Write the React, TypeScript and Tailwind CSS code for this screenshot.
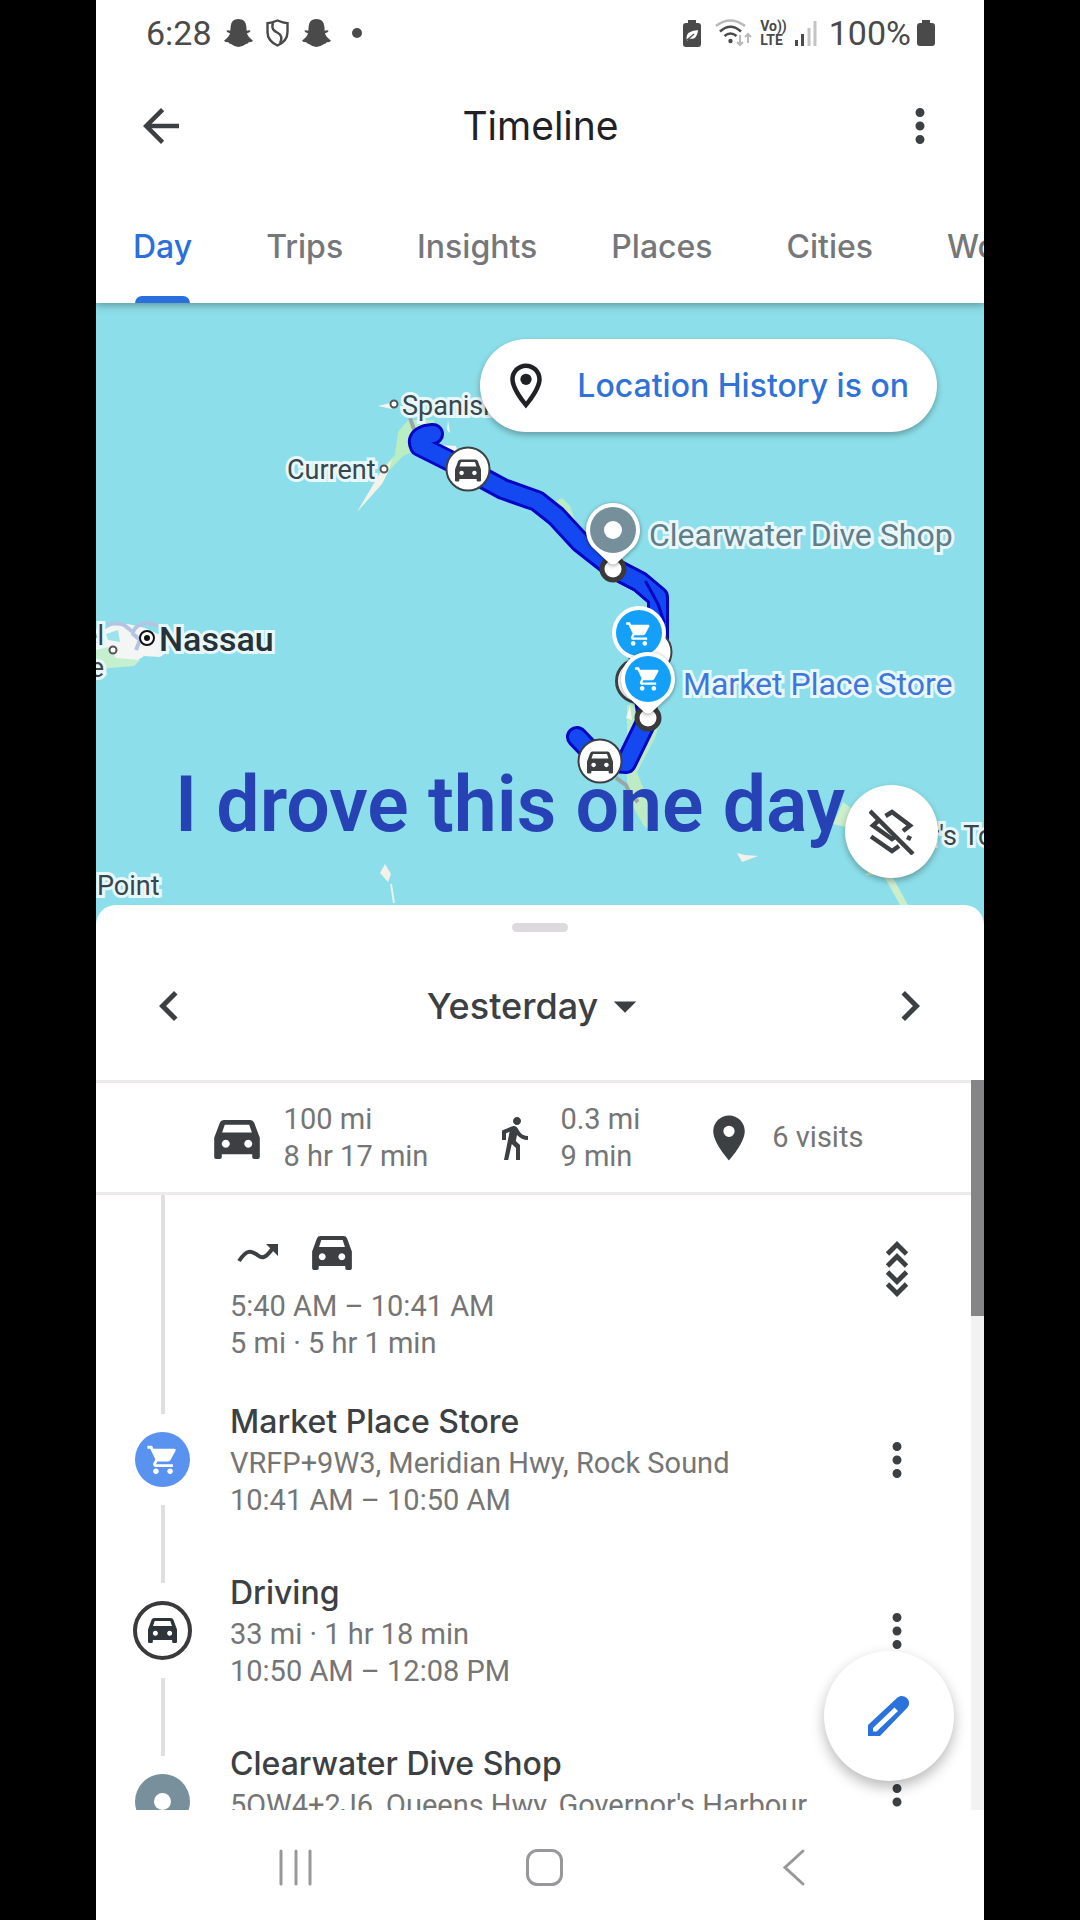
import type { ReactNode, SVGProps } from "react";
import {
  MdArrowBack,
  MdArrowDropDown,
  MdChevronLeft,
  MdChevronRight,
  MdDirectionsWalk,
  MdLocationOn,
  MdMoreVert,
  MdOutlineLocationOn,
  MdShoppingCart,
} from "react-icons/md";

const tabs = ["Day", "Trips", "Insights", "Places", "Cities", "World"];

function Car(props: SVGProps<SVGSVGElement>) {
  return (
    <svg viewBox="0 0 138 118" aria-hidden {...props}>
      <path
        fill="currentColor"
        fillRule="evenodd"
        d="M0 112 V54 L17 8 Q20 0 29 0 H109 Q118 0 121 8 L138 54 V112 Q138 118 132 118 H121 Q115 118 115 112 V104 H23 V112 Q23 118 17 118 H6 Q0 118 0 112Z M24 38 H114 L106 14 H32Z M35 60 a12 12 0 1 0 0.100 0Z M103 60 a12 12 0 1 0 0.100 0Z"
      />
    </svg>
  );
}

function Ghost() {
  return (
    <svg className="h-[28px] w-[29px]" viewBox="0 0 87 84" fill="currentColor" aria-hidden>
      <path d="M20 22 Q22 0 43 0 Q65 0 67 22 L68 35 Q76 32 80 35 Q79 40 69 43 Q72 55 87 65 Q84 70 74 70 Q72 75 66 75 Q56 83 43 84 Q31 83 21 75 Q15 75 13 70 Q3 70 0 65 Q15 55 18 43 Q8 40 7 35 Q11 32 19 35Z" />
    </svg>
  );
}

function StatusBar() {
  return (
    <div className="flex h-[66px] items-center justify-between pr-[49px] pl-[50px] text-[34px] text-[#4a4a4a]">
      <div className="flex items-center">
        <span className="mr-[12px]">6:28</span>
        <Ghost />
        <svg className="mx-[13px] h-[28px] w-[23px]" viewBox="0 0 23 28" fill="none" stroke="currentColor" strokeWidth="2.400" aria-hidden>
          <path d="M11.500 1.500 C8 3 5 4 1.500 4.200 V13 C1.500 19.500 6 24 11.500 26.500 C17 24 21.500 19.500 21.500 13 V4.200 C18 4 15 3 11.500 1.500Z" />
          <path d="M7 4 C5 10 8 12 12 14 C16.500 16.500 16 20 14 24" />
        </svg>
        <Ghost />
        <span className="ml-[21px] size-[10px] rounded-full bg-[#4a4a4a]" />
      </div>
      <div className="flex items-center">
        <svg className="mr-[14px] h-[27px] w-[18px]" viewBox="0 0 18 27" aria-hidden>
          <path d="M5 0 H13 V3 H15 Q18 3 18 6 V24 Q18 27 15 27 H3 Q0 27 0 24 V6 Q0 3 3 3 H5Z" fill="currentColor" />
          <path d="M3.500 18 C4 12 8 11 15 10 C14.500 16 12 20 6 18.500 L4 21Z" fill="#fff" />
          <path d="M4 20 L11 14" stroke="#4a4a4a" strokeWidth="1.200" />
        </svg>
        <svg className="mr-2 h-[28px] w-[37px]" viewBox="0 0 37 28" fill="none" strokeWidth="2.600" aria-hidden>
          <path d="M1 7 Q15 -4 30 7" stroke="#b9b9b9" />
          <path d="M5 12.500 Q15.500 3 26 12.500 M9.500 17 Q15.500 12 21.500 17" stroke="currentColor" />
          <circle cx="15.500" cy="22" r="2.200" fill="currentColor" />
          <path d="M25 16 V26 M22 23 L25 26 L28 23 M33 24 V15 M30 18 L33 15 L36 18" stroke="#b9b9b9" strokeWidth="2" />
        </svg>
        <span className="mr-2 flex flex-col text-[14px] leading-[14px] font-bold">
          <span>Vo))</span>
          <span>LTE</span>
        </span>
        <svg className="mr-3 h-[25px] w-[22px]" viewBox="0 0 22 25" aria-hidden>
          <path d="M0 19 h3 v6 h-3z M6 13 h3 v12 h-3z" fill="currentColor" />
          <path d="M12.500 7 h3 v18 h-3z M18.500 0 h3 v25 h-3z" fill="#c4c4c4" />
        </svg>
        <span className="mr-[6px]">100%</span>
        <svg className="h-[26px] w-[18px]" viewBox="0 0 18 26" fill="currentColor" aria-hidden>
          <path d="M5 0 H13 V3 H15 Q18 3 18 6 V23 Q18 26 15 26 H3 Q0 26 0 23 V6 Q0 3 3 3 H5Z" />
        </svg>
      </div>
    </div>
  );
}

function Header() {
  return (
    <header className="relative z-10 flex h-[303px] shrink-0 flex-col bg-white shadow-[0_2px_8px_rgba(0,0,0,0.35)]">
      <StatusBar />
      <div className="flex h-[120px] items-center justify-between pr-[37px] pl-[38px] text-[#3c4043]">
        <button type="button" aria-label="Back">
          <MdArrowBack className="size-[54px]" />
        </button>
        <h1 className="font-['Inter'] text-[39px] leading-[48px] text-[#202124]">Timeline</h1>
        <button type="button" aria-label="More options">
          <MdMoreVert className="size-[54px]" />
        </button>
      </div>
      <nav className="flex flex-1 gap-[74px] overflow-hidden pl-[37px] font-['Inter'] text-[32px] leading-[40px] font-medium text-[#75777a]">
        {tabs.map((tab, i) => (
          <button key={tab} type="button" className={i === 0 ? "relative flex h-full shrink-0 items-center pt-[4px] text-[#2a6fdb]" : "h-full shrink-0 pt-[4px]"}>
            {tab}
            {i === 0 && <span className="absolute inset-x-[2px] bottom-0 h-[7px] rounded-t-[7px] bg-[#2a6fdb]" />}
          </button>
        ))}
      </nav>
    </header>
  );
}

function CarMarker({ x, y }: { x: number; y: number }) {
  return (
    <g>
      <circle cx={x} cy={y} r="21.500" fill="#fff" stroke="#3c4043" strokeWidth="2" />
      <Car x={x - 13} y={y - 10} width="26" height="23" color="#3c4043" />
    </g>
  );
}

function Pin({ x, y, color, children }: { x: number; y: number; color: string; children: ReactNode }) {
  return (
    <g>
      <circle cx={x} cy={y + 39} r="11" fill="#fff" stroke="#3a3a3a" strokeWidth="5" />
      <path
        className="drop-shadow-[0_1px_2px_rgba(0,0,0,0.4)]"
        d={`M${x} ${y - 27} a27 27 0 0 1 21 44 l-16 15 q-5 5 -10 0 l-16 -15 a27 27 0 0 1 21 -44z`}
        fill="#fff"
      />
      <circle cx={x} cy={y} r="23" fill={color} />
      {children}
    </g>
  );
}

const halo = "absolute whitespace-nowrap [paint-order:stroke_fill] [-webkit-text-stroke:6px_#e8f7fa]";

const northRoute =
  "M433 434 L426 435 Q416 438 420 446 L468 470 L503 489 L537 501 L556 516 L580 542 L613 568 L640 582 L656 596";
const southRoute = "M613 568 L640 582 L658 597 L658 640 L645 700 L648 718 L626 763 L600 761 L577 737";

function TimelineMap() {
  return (
    <section aria-label="Map" className="relative h-[622px] shrink-0 overflow-hidden bg-[#8cdfea] font-['Roboto'] text-[#37474f]">
      <svg className="absolute inset-0 h-full w-full" viewBox="96 303 888 622" preserveAspectRatio="xMidYMid slice" aria-hidden>
        <path d="M408 420 L398 432 L395 455 L380 470 L386 474 L402 457 L422 446 L440 440 L434 420Z" fill="#b9eec3" />
        <path d="M392 460 L380 473 L370 490 L357 512 L382 484 L388 472Z" fill="#f5f2ea" />
        <path d="M378 406 L390 403 L392 409Z M448 420 L450 433 L447 430Z M440 445 L456 446 L458 453 L450 455Z" fill="#f3f5ee" />
        <path d="M410 418 L415 432" stroke="#9aa7aa" strokeWidth="4" />
        <path d="M552 503 L562 498 L570 506 L576 522Z" fill="#b9eec3" />
        <path d="M96 635 L112 625 L128 624 L145 628 L162 636 L170 650 L160 657 L144 656 L135 662 L112 666 L96 672Z" fill="#f4f6f6" />
        <path d="M96 650 L108 647 L116 658 L140 660 L134 666 L110 668 L96 671Z" fill="#c5f0cf" />
        <path d="M106 634 L118 630 L120 642 L108 640Z" fill="#9fe3ea" />
        <path d="M108 625 Q116 622 124 625 L133 632 Q136 624 148 623 L160 626" fill="none" stroke="#b5c4e0" strokeWidth="4" />
        <path d="M132 633 L140 640 L136 650" fill="none" stroke="#b5c4e0" strokeWidth="4" />
        <path d="M627 705 L637 703 L643 720 L660 722 L655 738 L637 772 L650 805 L655 833 L644 826 L630 802 L627 780Z" fill="#bdebc4" />
        <path d="M630 706 L626 718 L632 720Z" fill="#f7f7ef" />
        <path d="M616 778 L626 785 L630 794 L638 802" stroke="#9aa7aa" strokeWidth="4" fill="none" />
        <path d="M843 802 L833 824 L850 828 L860 815Z M865 875 L872 870 L885 878 L900 905 L908 905 L892 876Z" fill="#cbeecb" />
        <path d="M385 864 L380 873 L388 882 L391 874Z M737 853 L742 862 L758 856 L745 855Z" fill="#f4f1ea" />
        <path d="M391 884 L394 903" stroke="#e4f3ee" strokeWidth="2" />

        <g fill="none" strokeLinecap="round" strokeLinejoin="round">
          <path d={northRoute} stroke="#0505c4" strokeWidth="22" />
          <path d={southRoute} stroke="#0505c4" strokeWidth="22" />
          <path d={southRoute} stroke="#1449f2" strokeWidth="16" />
          <path d={northRoute} stroke="#1449f2" strokeWidth="16" />
          <path d="M646 582 L658 604 L664 622" stroke="#0505c4" strokeWidth="3" />
        </g>

        <CarMarker x={468} y={469} />
        <CarMarker x={600} y={761} />
        <circle cx="650" cy="652" r="21.500" fill="#fff" stroke="#3c4043" strokeWidth="2" />
        <circle cx="638" cy="681" r="21.500" fill="#fff" stroke="#3c4043" strokeWidth="3" />
        <Pin x={613} y={530} color="#76909b">
          <circle cx="613" cy="530" r="9" fill="#fff" />
        </Pin>
        <g>
          <circle cx="639" cy="633" r="27" fill="#fff" />
          <circle cx="639" cy="633" r="23" fill="#14a0f8" />
          <MdShoppingCart x={625} y={620} size={28} color="#fff" />
        </g>
        <Pin x={648} y={679} color="#14a0f8">
          <MdShoppingCart x={634} y={665} size={28} color="#fff" />
        </Pin>

        <g fill="#fff" stroke="#555" strokeWidth="2">
          <circle cx="394" cy="404" r="3.500" />
          <circle cx="384" cy="469" r="3.500" />
          <circle cx="113" cy="650" r="3.500" />
        </g>
        <circle cx="147" cy="638" r="7" fill="#fff" stroke="#111" strokeWidth="2" />
        <circle cx="147" cy="638" r="3" fill="#111" />
      </svg>

      <span className={`${halo} top-[87px] left-[306px] text-[27px] leading-[32px]`}>Spanish</span>
      <span className={`${halo} top-[151px] left-[191px] text-[27px] leading-[32px]`}>Current</span>
      <span className={`${halo} top-[212px] left-[553px] text-[32px] leading-[40px] text-[#5f7d8a]`}>Clearwater Dive Shop</span>
      <span className={`${halo} top-[361px] left-[587px] text-[32px] leading-[40px] text-[#3f78dc]`}>Market Place Store</span>
      <span className={`${halo} top-[316px] left-[63px] text-[34px] leading-[40px] font-medium text-[#263238]`}>Nassau</span>
      <span className={`${halo} top-[317px] right-[880px] text-[27px] leading-[32px]`}>el</span>
      <span className={`${halo} top-[349px] right-[880px] text-[27px] leading-[32px]`}>e</span>
      <span className={`${halo} top-[567px] left-[1px] text-[27px] leading-[32px]`}>Point</span>
      <span className={`${halo} top-[517px] left-[834px] text-[27px] leading-[32px]`}>r&apos;s To</span>

      <p className="absolute top-[452px] left-[79px] font-['Roboto'] text-[77px] leading-[100px] font-semibold whitespace-nowrap text-[#2642b4]">
        I drove this one day
      </p>

      <button
        type="button"
        className="absolute top-[36px] right-[47px] flex h-[93px] items-center gap-[24px] rounded-full bg-white pr-[28px] pl-[19px] font-['Inter'] text-[32px] leading-[40px] font-medium text-[#2f73d9] shadow-[0_3px_6px_rgba(0,0,0,0.3)]"
      >
        <MdOutlineLocationOn className="size-[54px] text-[#202124]" />
        Location History is on
      </button>
      <button
        type="button"
        aria-label="Layers off"
        className="absolute right-[46px] bottom-[47px] flex size-[93px] items-center justify-center rounded-full bg-white shadow-[0_3px_6px_rgba(0,0,0,0.3)]"
      >
        <svg className="size-[46px]" viewBox="0 0 46 46" fill="none" stroke="#3c4043" strokeWidth="4.500" aria-hidden>
          <path d="M16.500 7 L23 3 L41 16.500 L34 22" />
          <path d="M9 12 L4 16.500 L23 30 L26 28" />
          <path d="M2 27.500 L23 42 L30 37" />
          <path d="M38 28 L42 30" />
          <path d="M1 2 L44 45" />
        </svg>
      </button>
    </section>
  );
}

function Summary() {
  return (
    <div className="flex h-[115px] shrink-0 items-center justify-center gap-[62px] border-y-[3px] border-[#ebe9ea] pl-[10px] text-[29px] leading-[37px] text-[#757575]">
      <div className="flex items-center gap-[24px]">
        <Car className="mt-[4px] h-[39px] w-[46px] text-[#3c4043]" />
        <p>100 mi<br />8 hr 17 min</p>
      </div>
      <div className="flex items-center gap-[22px]">
        <MdDirectionsWalk className="size-[48px] text-[#3c4043]" />
        <p>0.3 mi<br />9 min</p>
      </div>
      <div className="flex items-center gap-[16px]">
        <MdLocationOn className="size-[54px] text-[#3c4043]" />
        <p>6 visits</p>
      </div>
    </div>
  );
}

function Entry({ icon, title, lines }: { icon: ReactNode; title: string; lines: string[] }) {
  return (
    <li className="flex h-[171px] shrink-0 pr-[47px] pl-[37px]">
      <div className="flex w-[59px] shrink-0 flex-col items-center gap-[18px]">
        <span className="w-[4px] flex-1 bg-[#dfdfe1]" />
        {icon}
        <span className="w-[4px] flex-1 bg-[#dfdfe1]" />
      </div>
      <div className="ml-[38px] flex min-w-0 flex-1 flex-col justify-center whitespace-nowrap">
        <h2 className="mb-[2px] font-['Inter'] text-[32px] leading-[42px] font-medium text-[#3c4043]">{title}</h2>
        {lines.map((line) => (
          <p key={line} className="text-[29px] leading-[37px] text-[#757575]">{line}</p>
        ))}
      </div>
      <button type="button" aria-label={`Options for ${title}`} className="self-center text-[#3c4043]">
        <MdMoreVert className="size-[54px]" />
      </button>
    </li>
  );
}

function Sheet() {
  return (
    <section className="relative z-10 -mt-[20px] flex min-h-0 flex-1 flex-col rounded-t-[20px] bg-white">
      <div className="flex h-[175px] shrink-0 flex-col items-center pt-[18px]">
        <span className="h-[9px] w-[56px] rounded-full bg-[#dcdadd]" />
        <div className="mt-[44px] flex h-[60px] w-full items-center justify-between pr-[44px] pl-[43px] text-[#3c4043]">
          <button type="button" aria-label="Previous day">
            <MdChevronLeft className="size-[60px]" />
          </button>
          <button type="button" className="flex items-center font-['Inter'] text-[36px] leading-[48px] font-medium">
            Yesterday
            <MdArrowDropDown className="size-[54px]" />
          </button>
          <button type="button" aria-label="Next day">
            <MdChevronRight className="size-[60px]" />
          </button>
        </div>
      </div>
      <div className="flex min-h-0 flex-1">
        <div className="flex min-w-0 flex-1 flex-col overflow-hidden">
          <Summary />
          <ol className="flex min-h-0 flex-1 flex-col overflow-hidden">
            <li className="flex h-[179px] shrink-0 pr-[47px] pl-[37px]">
              <div className="flex w-[59px] shrink-0 justify-center">
                <span className="w-[4px] bg-[#dfdfe1]" />
              </div>
              <div className="ml-[38px] min-w-0 flex-1 pt-[34px] text-[29px] leading-[37px] text-[#757575]">
                <div className="mb-[11px] flex h-[48px] items-center gap-[30px] pl-[4px] text-[#3c4043]">
                  <svg className="h-[26px] w-[48px]" viewBox="0 0 48 26" fill="none" aria-hidden>
                    <path d="M5 21 C13 9 17 11 22 14 C28 19 31 19 39 8" stroke="currentColor" strokeWidth="4" />
                    <path d="M32 4 H44 V16Z" fill="currentColor" />
                  </svg>
                  <Car className="h-[34px] w-[40px]" />
                </div>
                <p>5:40 AM – 10:41 AM</p>
                <p>5 mi · 5 hr 1 min</p>
              </div>
              <button type="button" aria-label="Expand segment" className="mt-[44px] flex h-[60px] w-[54px] items-center justify-center self-start text-[#3c4043]">
                <svg className="h-[56px] w-[22px]" viewBox="0 0 22 56" fill="none" stroke="currentColor" strokeWidth="4.800" aria-hidden>
                  <path d="M1.500 13 L11 3.500 L20.500 13 M1.500 25 L11 15.500 L20.500 25 M1.500 31 L11 40.500 L20.500 31 M1.500 43 L11 52.500 L20.500 43" />
                </svg>
              </button>
            </li>
            <Entry
              title="Market Place Store"
              lines={["VRFP+9W3, Meridian Hwy, Rock Sound", "10:41 AM – 10:50 AM"]}
              icon={
                <span className="flex size-[55px] items-center justify-center rounded-full bg-[#5a92f0] text-white">
                  <MdShoppingCart className="size-[34px]" />
                </span>
              }
            />
            <Entry
              title="Driving"
              lines={["33 mi · 1 hr 18 min", "10:50 AM – 12:08 PM"]}
              icon={
                <span className="flex size-[59px] items-center justify-center rounded-full border-[4px] border-[#3a3a3c] text-[#2d343a]">
                  <Car className="h-[25px] w-[29px]" />
                </span>
              }
            />
            <Entry
              title="Clearwater Dive Shop"
              lines={["5QW4+2J6, Queens Hwy, Governor's Harbour", "12:08 PM – 12:30 PM"]}
              icon={
                <span className="flex size-[55px] items-center justify-center rounded-full bg-[#78909c]">
                  <span className="size-[17px] rounded-full bg-white" />
                </span>
              }
            />
          </ol>
        </div>
        <div className="w-[13px] bg-[#f3f2f3]">
          <div className="h-[236px] bg-[#858487]" />
        </div>
      </div>
      <button
        type="button"
        aria-label="Edit"
        className="absolute right-[30px] bottom-[29px] flex size-[130px] items-center justify-center rounded-full bg-white shadow-[0_6px_14px_rgba(0,0,0,0.28)]"
      >
        <svg className="size-[42px]" viewBox="0 0 42 42" aria-hidden>
          <path
            fillRule="evenodd"
            fill="#2a72dc"
            d="M0 41 V30 L29.500 2.500 C35 -2.500 45 5 39.500 12.500 L12 41Z M5 36.500 H8.500 L30 16 L26.500 12.500 L5 33Z"
          />
        </svg>
      </button>
    </section>
  );
}

function SystemNav() {
  return (
    <nav className="flex h-[110px] shrink-0 items-center justify-between bg-white pt-[3px] pr-[170px] pl-[180px] text-[#98989b]">
      <button type="button" aria-label="Recent apps">
        <svg className="size-[40px]" viewBox="0 0 40 40" stroke="currentColor" strokeWidth="3" strokeLinecap="round">
          <path d="M5 4 V37 M20 4 V37 M34 4 V37" />
        </svg>
      </button>
      <button type="button" aria-label="Home">
        <svg className="size-[40px]" viewBox="0 0 40 40" fill="none" stroke="currentColor" strokeWidth="3">
          <rect x="2.500" y="3.500" width="34" height="34" rx="10" />
        </svg>
      </button>
      <button type="button" aria-label="System back">
        <svg className="size-[40px]" viewBox="0 0 40 40" fill="none" stroke="currentColor" strokeWidth="3" strokeLinecap="round">
          <path d="M29 4 L11 20.500 L29 37" />
        </svg>
      </button>
    </nav>
  );
}

export default function App() {
  return (
    <div className="h-screen bg-black px-24 font-['Roboto',sans-serif]">
      <main className="flex h-full flex-col overflow-hidden bg-white">
        <Header />
        <TimelineMap />
        <Sheet />
        <SystemNav />
      </main>
    </div>
  );
}
